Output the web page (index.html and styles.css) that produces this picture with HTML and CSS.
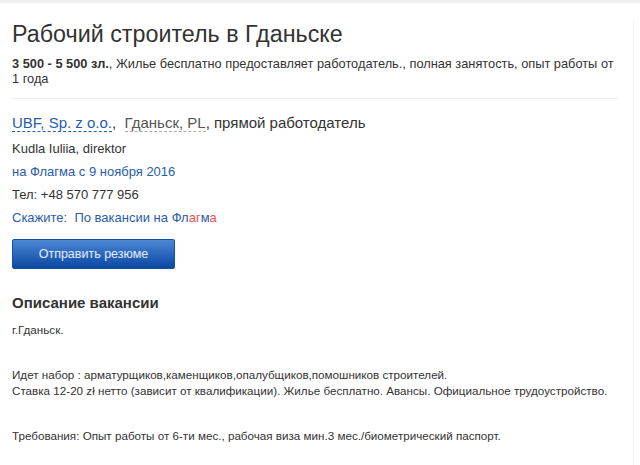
FILE: index.html
```html
<!DOCTYPE html>
<html lang="ru">
<head>
<meta charset="utf-8">
<title>Рабочий строитель в Гданьске</title>
<link rel="stylesheet" href="styles.css">
</head>
<body>
<div class="topbar"></div>
<div class="main">
  <div class="card">
    <h1 class="title">Рабочий строитель в Гданьске</h1>
    <p class="summary"><b>3 500 - 5 500 зл.</b>, Жилье бесплатно предоставляет работодатель., полная занятость, опыт работы от 1 года</p>
    <hr class="divider">
    <div class="company">
      <span class="link-dashed">UBF, Sp. z o.o.</span>,&nbsp; <span class="gray-dashed">Гданьск, PL</span>, прямой работодатель
    </div>
    <div class="info first">Kudla Iuliia, direktor</div>
    <div class="info blue">на Флагма с 9 ноября 2016</div>
    <div class="info">Тел: +48 570 777 956</div>
    <div class="info blue">Скажите:&nbsp; По вакансии на Фл<span class="red">аг</span>м<span class="red">а</span></div>
    <button class="btn" type="button">Отправить резюме</button>
    <h2 class="section">Описание вакансии</h2>
    <div class="desc">
      <p>г.Гданьск.</p>
      <p>Идет набор : арматурщиков,каменщиков,опалубщиков,помошников строителей.<br>Ставка 12-20 zł нетто (зависит от квалификации). Жилье бесплатно. Авансы. Официальное трудоустройство.</p>
      <p>Требования: Опыт работы от 6-ти мес., рабочая виза мин.3 мес./биометрический паспорт.</p>
    </div>
  </div>
  <div class="side"></div>
</div>
</body>
</html>
```
FILE: styles.css
```css
html, body {
  margin: 0;
  padding: 0;
  background: #ffffff;
  font-family: "Liberation Sans", Arial, sans-serif;
  color: #333333;
}
.topbar {
  height: 3px;
  background: #f0f0f0;
}
.main {
  display: flex;
}
.card {
  width: 606px;
  padding: 0 12px 0 12px;
}
.side {
  margin-top: 17px;
  margin-left: 3px;
  border-left: 1px solid #f0f0f0;
  flex: 1;
  height: 460px;
}
.title {
  margin: 16px 0 0 0;
  font-size: 23.3px;
  font-weight: normal;
  line-height: 30px;
  color: #333333;
}
.summary {
  margin: 7px 0 0 0;
  font-size: 12.8px;
  line-height: 15px;
  color: #333333;
}
.summary b {
  color: #333333;
}
.divider {
  margin: 12px 0 0 0;
  border: 0;
  border-top: 1px solid #eeeeee;
  height: 0;
}
.company {
  margin-top: 15px;
  font-size: 15px;
  line-height: 18px;
  color: #333333;
}
.link-dashed {
  color: #2a5caa;
  border-bottom: 1px dashed #2a5caa;
}
.gray-dashed {
  color: #555555;
  border-bottom: 1px dashed #aaaaaa;
}
.info {
  margin-top: 8px;
  font-size: 13px;
  line-height: 15px;
  color: #333333;
}
.info.first {
  margin-top: 9px;
}
.blue {
  color: #2a5caa;
}
.red {
  color: #e8574a;
}
.btn {
  display: block;
  margin-top: 14px;
  width: 163px;
  height: 30px;
  padding: 0;
  border: 1px solid #1450a8;
  border-radius: 2px;
  background: linear-gradient(#4c87d6, #0a47a1);
  color: #e6eefc;
  font-family: "Liberation Sans", Arial, sans-serif;
  font-size: 12.5px;
}
.section {
  margin: 25px 0 0 0;
  font-size: 15px;
  line-height: 18px;
  font-weight: bold;
  color: #333333;
}
.desc {
  margin-top: 10px;
  font-size: 11.65px;
  line-height: 16px;
  color: #333333;
}
.desc p {
  margin: 0 0 29px 0;
}
```
